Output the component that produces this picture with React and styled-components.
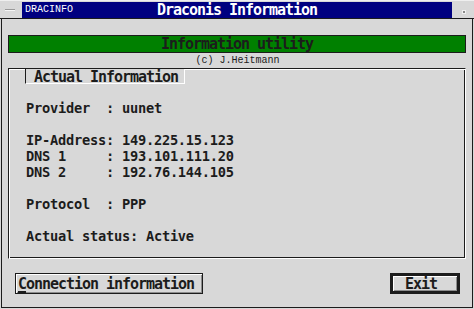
import React from 'react';
import styled, { createGlobalStyle } from 'styled-components';

const GlobalStyle = createGlobalStyle`
  html, body {
    margin: 0;
    padding: 0;
    background: #d8d8d8;
  }

  body {
    width: 474px;
    height: 309px;
    overflow: hidden;
  }
`;

const ink = '#1c1c1c';
const mono = `'DejaVu Sans Mono', 'Liberation Mono', monospace`;

const StyledWindow = styled.div`
  width: 474px;
  height: 309px;
  display: flex;
  flex-direction: column;
  background: #d8d8d8;
  font-family: ${mono};
  color: ${ink};
`;

const TitleBar = styled.div`
  display: flex;
  height: 19px;
  box-sizing: border-box;
  padding-top: 2px;
  border-bottom: 1px solid ${ink};
  box-shadow: inset 0 1px 0 #efefef;
`;

const WidgetBox = styled.div`
  width: 22px;
  height: 16px;
  display: flex;
  align-items: center;
  justify-content: center;
  flex-shrink: 0;
`;

const CloserDash = styled.span`
  display: block;
  width: 10px;
  height: 1px;
  margin-left: -3px;
  background: #9a9a9a;
  border-bottom: 1px solid #f4f4f4;
`;

const FullerDot = styled.span`
  display: block;
  width: 2px;
  height: 2px;
  margin-left: 1px;
  margin-top: 4px;
  background: #8a8a8a;
  border: 1px solid #f0f0f0;
`;

const TitleStrip = styled.div`
  flex: 1;
  height: 16px;
  background: #000080;
  display: grid;
  grid-template-columns: 1fr auto 1fr;
  align-items: center;
`;

const SmallText = styled.span`
  font-family: 'Liberation Mono', monospace;
  font-size: 10px;
  line-height: ${({ $lh }) => $lh || 16}px;
  color: ${({ $color }) => $color || ink};
`;

const AppName = styled(SmallText)`
  padding-left: 3px;
`;

// 8px advance per glyph, whatever the size
const BigText = styled.span`
  display: inline-block;
  height: 16px;
  font-family: ${mono};
  font-weight: bold;
  font-size: ${({ $size }) => $size || 15}px;
  letter-spacing: ${({ $size }) => 8 - ($size || 15) * 0.602}px;
  line-height: 16px;
  white-space: pre;
  color: ${({ $color }) => $color || ink};
`;

const Body = styled.div`
  flex: 1;
  margin: 0 1px 1px;
  border: 1px solid ${ink};
  border-top: none;
  padding: 16px 6px 0;
  display: flex;
  flex-direction: column;
`;

const Banner = styled.div`
  height: 18px;
  box-sizing: border-box;
  border: 1px solid ${ink};
  background: #008000;
  display: flex;
  align-items: center;
  justify-content: center;
`;

const Credit = styled.div`
  height: 15px;
  display: flex;
  justify-content: center;
  padding-left: 1px;
`;

const Frame = styled.div`
  position: relative;
  height: 191px;
  box-sizing: border-box;
  border-top: 1px solid ${ink};
  border-left: 1px solid ${ink};
  border-bottom: 1px solid #fff;
  border-right: 1px solid #fff;
  box-shadow: inset 1px 1px 0 #fff, inset -1px -1px 0 ${ink};
  padding: 31px 0 0 17px;
  display: flex;
  flex-direction: column;
`;

const Legend = styled.div`
  position: absolute;
  top: 0;
  left: 16px;
  width: 160px;
  height: 15px;
  box-sizing: border-box;
  background: #d8d8d8;
  border-left: 1px solid ${ink};
  border-right: 1px solid #fff;
  border-bottom: 1px solid #fff;
  padding-left: 8px;
  display: flex;
  align-items: flex-start;
`;

const InfoRow = styled.div`
  height: 16px;
  margin-top: ${({ $gap }) => ($gap ? 16 : 0)}px;
  display: flex;
  align-items: center;
`;

const ButtonRow = styled.div`
  margin-top: 14px;
  padding: 0 6px 0 7px;
  display: flex;
  justify-content: space-between;
`;

const Button = styled.div`
  width: ${({ $width }) => $width}px;
  height: 21px;
  box-sizing: border-box;
  border: ${({ $default }) => ($default ? 3 : 1)}px solid ${ink};
  box-shadow: inset 1px 1px 0 #fff, inset -1px -1px 0 #8c8c8c;
  padding-left: ${({ $pad }) => $pad}px;
  display: flex;
  align-items: center;
  overflow: hidden;
`;

const Hotkey = styled.span`
  text-decoration: underline;
  text-underline-offset: 2px;
  text-decoration-thickness: 2px;
`;

const rows = [
  { text: 'Provider  : uunet' },
  { text: 'IP-Address: 149.225.15.123', gap: true },
  { text: 'DNS 1     : 193.101.111.20' },
  { text: 'DNS 2     : 192.76.144.105' },
  { text: 'Protocol  : PPP', gap: true },
  { text: 'Actual status: Active', gap: true },
];

const App = () => (
  <>
    <GlobalStyle />
    <StyledWindow>
      <TitleBar>
        <WidgetBox>
          <CloserDash />
        </WidgetBox>
        <TitleStrip>
          <AppName $color="#fff">DRACINFO</AppName>
          <BigText $color="#fff">Draconis Information</BigText>
          <span />
        </TitleStrip>
        <WidgetBox>
          <FullerDot />
        </WidgetBox>
      </TitleBar>

      <Body>
        <Banner>
          <BigText>Information utility</BigText>
        </Banner>
        <Credit>
          <SmallText $lh={15}>(c) J.Heitmann</SmallText>
        </Credit>

        <Frame>
          <Legend>
            <BigText>Actual Information</BigText>
          </Legend>
          {rows.map((row) => (
            <InfoRow key={row.text} $gap={row.gap}>
              <BigText $size={13.7}>{row.text}</BigText>
            </InfoRow>
          ))}
        </Frame>

        <ButtonRow>
          <Button $width={188} $pad={2}>
            <BigText>
              <Hotkey>C</Hotkey>onnection information
            </BigText>
          </Button>
          <Button $width={70} $pad={12} $default>
            <BigText>
              <Hotkey>E</Hotkey>xit
            </BigText>
          </Button>
        </ButtonRow>
      </Body>
    </StyledWindow>
  </>
);

export default App;
